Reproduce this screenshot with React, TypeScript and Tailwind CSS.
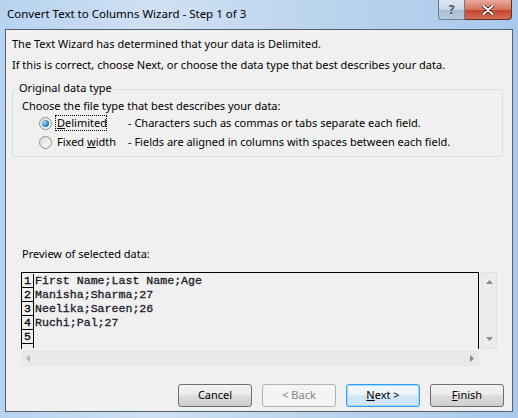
import React from 'react';

const ui = { fontFamily: '"Noto Sans", "Open Sans", Arial, sans-serif' };
const mono = { fontFamily: '"Liberation Mono", "Courier New", monospace' };

const Radio: React.FC<{ checked?: boolean }> = ({ checked }) => (
  <span className="flex h-[13px] w-[13px] items-center justify-center rounded-full border border-[#8e8f8f] bg-gradient-to-br from-[#dcdcdc] to-[#fbfbfb]">
    {checked && (
      <span className="h-[7px] w-[7px] rounded-full bg-[radial-gradient(circle_at_35%_35%,#a7dcf7,#1b6fb4_70%)]" />
    )}
  </span>
);

const Btn: React.FC<{ children: React.ReactNode; disabled?: boolean; focused?: boolean; ml?: string }> = ({ children, disabled, focused, ml }) => {
  let cls = 'flex h-[23px] w-[74px] items-center justify-center rounded-[3px] border text-[11px] ';
  if (disabled) cls += 'border-[#adb2b5] bg-[#f4f4f4] text-[#838383]';
  else if (focused) cls += 'border-[#3399ff] bg-[linear-gradient(#f3f9fd_0%,#e9f3fa_45%,#d4e7f5_50%,#cfe3f3_100%)] text-black shadow-[inset_0_0_0_1px_#a7dcf7]';
  else cls += 'border-[#707070] bg-[linear-gradient(#f2f2f2_0%,#ebebeb_45%,#dddddd_50%,#cfcfcf_100%)] text-black';
  return (
    <div className={cls + ' ' + (ml || '')} style={ui}>
      {children}
    </div>
  );
};

const rows = ['First Name;Last Name;Age', 'Manisha;Sharma;27', 'Neelika;Sareen;26', 'Ruchi;Pal;27', ''];

export default function App() {
  return (
    <div className="relative flex h-[418px] w-[518px] flex-col overflow-hidden bg-[linear-gradient(90deg,#b7d3f0_0%,#cfe0f3_30%,#bcd5ee_60%,#a9c9ec_100%)]">
      {/* title bar */}
      <div className="flex h-[29px] items-start">
        <div className="pl-[7px] pt-[6px] text-[11.5px] leading-[16px] text-black" style={ui}>
          Convert Text to Columns Wizard - Step 1 of 3
        </div>
        <div className="ml-auto mr-[6px] flex">
          <div className="flex h-[20px] w-[27px] items-center justify-center rounded-bl-[4px] border border-t-0 border-[#6d7a8c] bg-[linear-gradient(#dfe8f2_0%,#c7d6e6_50%,#a8bcd3_51%,#b8cde2_100%)] text-[12px] font-bold text-[#4a5566]" style={ui}>
            ?
          </div>
          <div className="flex h-[20px] w-[47px] items-center justify-center rounded-br-[4px] border border-l-0 border-t-0 border-[#6b2a1f] bg-[linear-gradient(#e9a99c_0%,#d7725f_50%,#c7432b_51%,#d46b55_100%)]">
            <svg width="12" height="10" viewBox="0 0 12 10">
              <path d="M1.5 1 L10.5 9 M10.5 1 L1.5 9" stroke="#3b1a14" strokeWidth="3.6" strokeLinecap="round" />
              <path d="M1.5 1 L10.5 9 M10.5 1 L1.5 9" stroke="#ffffff" strokeWidth="2" strokeLinecap="round" />
            </svg>
          </div>
        </div>
      </div>

      {/* client area */}
      <div className="mx-[5px] flex h-[383px] w-[508px] flex-col border border-[#56606c] bg-[#f0f0f0] text-[11px] text-black" style={ui}>
        <div className="pl-[6px] pt-[6px] leading-[16px]">The Text Wizard has determined that your data is Delimited.</div>
        <div className="pl-[6px] pt-[5px] leading-[16px]">If this is correct, choose Next, or choose the data type that best describes your data.</div>

        {/* group box */}
        <div className="relative ml-[6px] mt-[16px] h-[68px] w-[491px] rounded-[3px] border border-[#d5dfe5]">
          <div className="absolute left-[5px] top-[-10px] bg-[#f0f0f0] px-[1px] leading-[16px]">Original data type</div>
          <div className="pl-[9px] pt-[8px] leading-[16px]">Choose the file type that best describes your data:</div>
          <div className="mt-[1px] flex h-[16px] items-center pl-[26px]">
            <Radio checked />
            <span className="ml-[3px] w-[52px] border border-dotted border-black px-[1px] leading-[14px]">
              <u>D</u>elimited
            </span>
            <span className="ml-[21px]">- Characters such as commas or tabs separate each field.</span>
          </div>
          <div className="mt-[3px] flex h-[16px] items-center pl-[26px]">
            <Radio />
            <span className="ml-[4px] w-[72px] pl-[1px]">
              Fixed <u>w</u>idth
            </span>
            <span>- Fields are aligned in columns with spaces between each field.</span>
          </div>
        </div>

        <div className="ml-[16px] mt-[89px] leading-[16px]">Preview of selected data:</div>

        {/* preview */}
        <div className="ml-[15px] mt-[10px] flex">
          <div className="flex flex-col">
            <div className="h-[77px] w-[458px] overflow-hidden border border-b-0 border-black bg-[#f0f0f0]">
              <div className="flex pt-[1px]">
                <div className="flex w-[12px] flex-col border-r border-black">
                  {rows.map((_, i) => (
                    <div key={i} className="h-[14px] border-b border-black pl-[2px] text-[11.5px] leading-[13px] [-webkit-text-stroke:0.3px_#000]" style={mono}>
                      {i + 1}
                    </div>
                  ))}
                  <div className="h-[4px]" />
                </div>
                <div className="flex flex-col pl-[1px]">
                  {rows.map((r, i) => (
                    <div key={i} className="h-[14px] whitespace-pre text-[11.6px] leading-[13px] text-[#1a1a2a] [-webkit-text-stroke:0.3px_#1a1a2a]" style={mono}>
                      {r}
                    </div>
                  ))}
                </div>
              </div>
            </div>
            <div className="flex h-[17px] w-[458px] items-center justify-between border-t border-[#f8f8f8] bg-[#e9e9e9] px-[5px]">
              <svg width="4" height="7" viewBox="0 0 4 7"><path d="M4 0 L0 3.5 L4 7 Z" fill="#b5b5b5" /></svg>
              <svg width="4" height="7" viewBox="0 0 4 7"><path d="M0 0 L4 3.5 L0 7 Z" fill="#8a8a8a" /></svg>
            </div>
          </div>
          <div className="ml-[2px] flex h-[77px] w-[16px] flex-col items-center justify-between border border-[#e2e2e2] bg-[#ececec] py-[7px]">
            <svg width="7" height="4" viewBox="0 0 7 4"><path d="M0 4 L3.5 0 L7 4 Z" fill="#8a8a8a" /></svg>
            <svg width="7" height="4" viewBox="0 0 7 4"><path d="M0 0 L3.5 4 L7 0 Z" fill="#8a8a8a" /></svg>
          </div>
        </div>

        {/* buttons */}
        <div className="mt-[18px] flex pl-[172px]">
          <Btn>Cancel</Btn>
          <Btn disabled ml="ml-[10px]">&lt; Back</Btn>
          <Btn focused ml="ml-[10px]"><span><u>N</u>ext &gt;</span></Btn>
          <Btn ml="ml-[10px]"><span><u>F</u>inish</span></Btn>
        </div>
      </div>
    </div>
  );
}
